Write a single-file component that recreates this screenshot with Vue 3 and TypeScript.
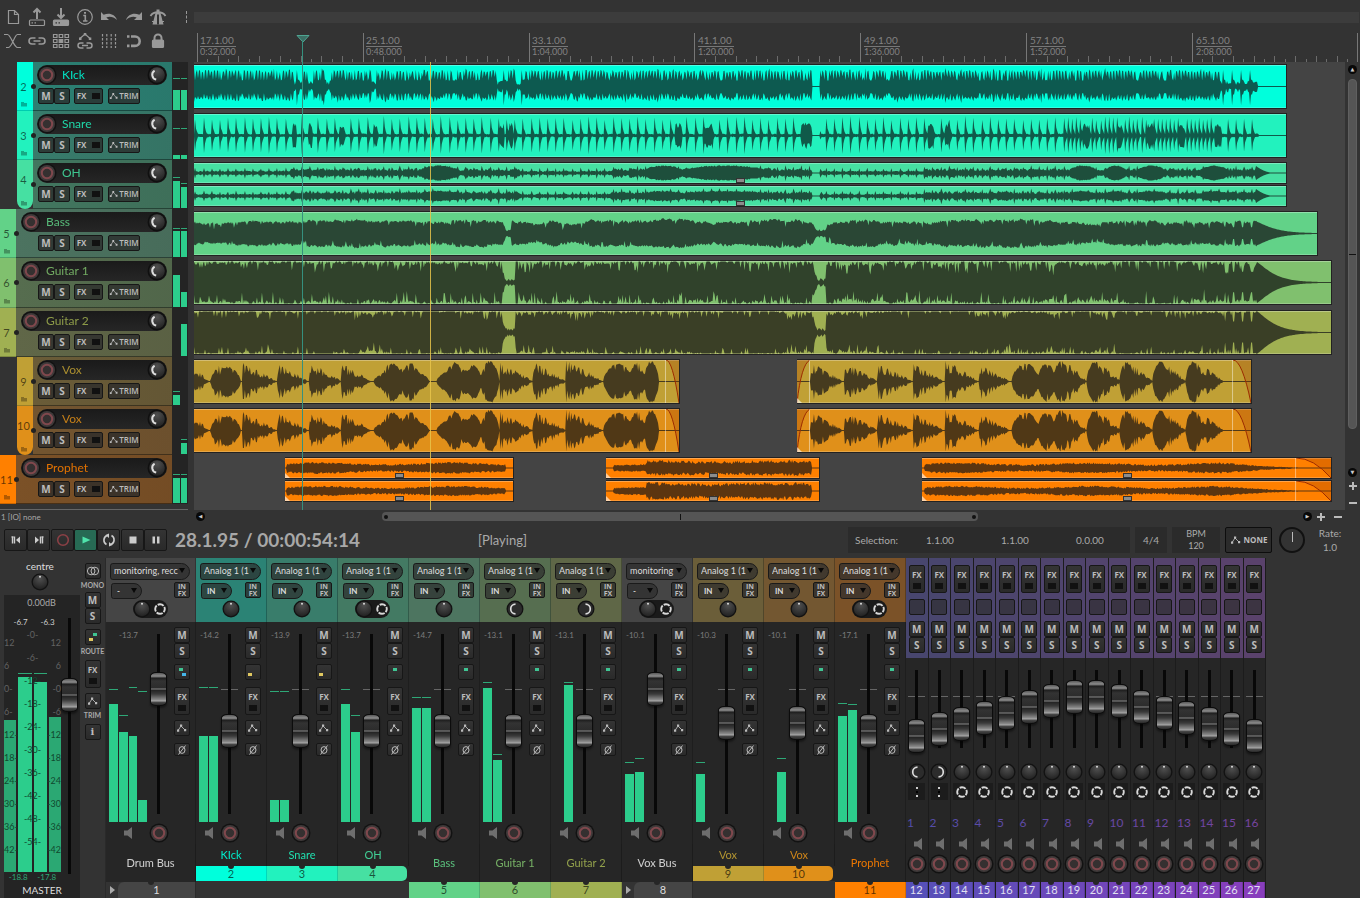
<script setup lang="ts">
type Amp = [number, number]
interface Lane { d: string; h: number }
interface Clip { x: number; w: number; lanes: Lane[]; handle: boolean; fadeIn: number; fadeOut: number }
interface Meter { h: number; peak: number }
interface Track {
  no: number; name: string; child: boolean; last: boolean; color: string; panel: string; ink: string
  meters: Meter[]; clips: Clip[]
}
interface Strip {
  no: number; name: string; kind: 'bus' | 'child' | 'solo'; last: boolean; wide: boolean
  color: string; head: string; input: string; mode: string; peak: string; fader: number
  pan: 'mid' | 'left' | 'right'; width: boolean; route: string; meters: Meter[]
}

const ORIGIN = 194
const SPAN = 1151
const pct = (n: number): string => (n / SPAN) * 100 + '%'

function seeded(seed: number): () => number {
  let s = seed
  return () => {
    s = (s * 1664525 + 1013904223) % 4294967296
    return s / 4294967296
  }
}

function trace(x0: number, x1: number, h: number, env: (x: number) => Amp): string {
  const mid = h / 2
  const up: string[] = []
  const down: string[] = []
  for (let x = x0; x <= x1; x++) {
    const [a, b] = env(x)
    up.push(`${x - x0} ${(mid - 0.4 - Math.max(0, a) * mid).toFixed(1)}`)
    down.push(`${x - x0} ${(mid + 0.4 + Math.max(0, b) * mid).toFixed(1)}`)
  }
  return `M${up.join('L')}L${down.reverse().join('L')}Z`
}

function clip(x: number, end: number, envs: ((x: number) => Amp)[], fadeIn = 0, fadeOut = 0): Clip {
  const h = envs.length > 1 ? 20 : 43
  return {
    x, w: end - x, fadeIn, fadeOut, handle: envs.length > 1,
    lanes: envs.map((e) => ({ h, d: trace(x, end, h, e) })),
  }
}

const within = (x: number, spans: number[][]): number[] | undefined => spans.find(([a, b]) => x >= a && x <= b)
const BREAK = [[813, 820]]

function kick(): (x: number) => Amp {
  const r = seeded(7)
  return (x) => {
    if (within(x, BREAK) || x > 1258) return [0, 0]
    if (within(x, [[294, 302], [308, 313], [324, 330], [372, 376], [497, 508], [516, 524], [1222, 1258]])) {
      const p = x % 9
      return p < 1 ? [0.75, 0.85] : p < 3 ? [0.3, 0.35] : [0.06 + r() * 0.2, 0.06 + r() * 0.2]
    }
    const tall = x % 16 === 2 ? 0.1 : 0
    if (r() < 0.14) return [0.26, 0.3]
    return x % 3 === 0 ? [0.26 + r() * 0.2, 0.3 + r() * 0.2] : [0.62 + r() * 0.14 + tall, 0.5 + r() * 0.16 + tall]
  }
}

function snare(): (x: number) => Amp {
  const r = seeded(11)
  const dense = [[293, 296], [309, 312], [340, 343], [374, 377], [501, 504], [510, 513], [676, 682], [706, 713], [802, 812], [929, 934], [946, 949], [1084, 1090], [1119, 1123], [1149, 1154], [1181, 1185], [1216, 1222]]
  let hit = 0
  let amp = 0.75
  return (x) => {
    if (within(x, BREAK) || x > 1259) return [0, 0]
    if (within(x, dense)) return [0.3 + r() * 0.28, 0.34 + r() * 0.28]
    const period = x > 1066 && x < 1222 ? 4.1 : 8.2
    const beat = Math.floor((x - 195) / period)
    if (beat !== hit) {
      hit = beat
      amp = 0.68 + r() * 0.18
    }
    const p = Math.floor(x - 195 - beat * period)
    const k = p === 0 ? amp : p === 1 ? amp * 0.42 : p === 2 ? 0.16 : 0.03
    return [k + r() * 0.04, k * 0.96 + r() * 0.04]
  }
}

function overhead(seed: number, full: number): (x: number) => Amp {
  const r = seeded(seed)
  const blobs = [[420, 458], [645, 683], [682, 768], [1070, 1097], [1106, 1126], [1138, 1166], [1202, 1228]]
  return (x) => {
    if (within(x, BREAK)) return [0.02, 0.02]
    if (x > 1256) {
      const t = Math.max(0, 1 - (x - 1256) / 18)
      return [0.75 * t * t, 0.75 * t * t]
    }
    const busy = x > 290 && !(x > 520 && x < 612) && !(x > 822 && x < 925)
    const beat = Math.floor((x - 195) % 8.2) === 0 ? 0.3 : 0
    const base = (busy ? 0.16 : 0.07) + beat + r() * (busy ? 0.28 : 0.14)
    const b = within(x, blobs)
    if (b) {
      const v = full * Math.pow(Math.abs(Math.sin((Math.PI * (x - b[0])) / (b[1] - b[0]))), 0.4) + r() * 0.12
      return [Math.max(base, v), Math.max(base, v)]
    }
    return [base, base * (0.9 + r() * 0.2)]
  }
}

function sustained(seed: number, level: number, noise: number, dips: number, gaps: number[][]): (x: number) => Amp {
  const r = seeded(seed)
  let drift = 0
  const side = (): number => {
    const dip = r() < dips ? noise * 2.2 * r() : 0
    return Math.min(0.96, level + drift + (r() - 0.7) * noise - dip)
  }
  return (x) => {
    drift = drift * 0.94 + (r() - 0.5) * 0.06
    if (x > 1257) {
      const k = level * Math.exp(-Math.pow((x - 1257) / 19, 1.25))
      return x > 1318 ? [0, 0] : [k, k]
    }
    const g = within(x, gaps)
    if (g) {
      const v = 0.05 + r() * 0.14 + 0.35 * Math.max(0, 1 - (x - g[0]) / 3)
      return [v, v]
    }
    if (x > 1225 && (x - 1225) % 9 < 2) return [level * 0.5, level * 0.45]
    return [side(), side()]
  }
}

const PHRASES = [
  [186, 209, 0.85, 0], [210, 241, 0.72, 1], [215, 241, 0.85, 0], [243, 276, 0.85, 0], [278, 308, 0.8, 0], [310, 341, 0.85, 0], [342, 371, 0.8, 0],
  [374, 430, 0.6, 1], [382, 403, 0.9, 1], [401, 421, 0.85, 1], [437, 481, 0.6, 1], [445, 466, 0.9, 1], [466, 482, 0.78, 1], [481, 500, 0.98, 1], [501, 533, 0.85, 0], [534, 566, 0.9, 0], [567, 603, 0.95, 0],
  [604, 634, 0.85, 1], [630, 646, 0.86, 1], [644, 660, 0.98, 1], [811, 842, 0.85, 0], [845, 877, 0.82, 0], [878, 912, 0.82, 0], [914, 943, 0.8, 0],
  [946, 978, 0.96, 0], [980, 1010, 0.78, 0], [1012, 1040, 0.86, 1], [1038, 1056, 0.9, 1], [1053, 1071, 0.97, 1],
  [1070, 1087, 0.8, 0], [1087, 1105, 0.96, 1], [1103, 1121, 0.76, 0], [1120, 1135, 0.96, 1], [1134, 1153, 0.78, 0],
  [1153, 1170, 0.95, 1], [1168, 1186, 0.76, 0], [1186, 1204, 0.98, 1], [1202, 1224, 0.74, 0],
]

function vocal(seed: number): (x: number) => Amp {
  const r = seeded(seed)
  return (x) => {
    let a = 0
    let solid = false
    for (const [s, e, p, round] of PHRASES) {
      if (x < s || x > e) continue
      const t = (x - s) / (e - s)
      const v = round ? p * Math.pow(Math.abs(Math.sin(Math.PI * t)), 0.6) : p * Math.pow(1 - t, 0.85)
      if (v > a) {
        a = v
        solid = round === 1
      }
    }
    const n = r()
    const u = r()
    const w = r()
    if (a === 0) return [0, 0]
    const notch = solid ? (n < 0.12 ? 0.65 : 0.97) : n < 0.32 ? 0.48 : n < 0.6 ? 0.7 : 1
    return [Math.min(0.96, a * notch * (0.85 + u * 0.18)), Math.min(0.96, a * notch * (0.9 + w * 0.18))]
  }
}

function pad(seed: number, level: number, x0: number, x1: number, swell = 0): (x: number) => Amp {
  const r = seeded(seed)
  return (x) => {
    if (x < x0 || x > x1) return [0, 0]
    const l = swell ? (x > swell ? level * 2 : level * 0.8) : level
    const wob = 0.75 + (swell && x > swell ? 0.1 : 0.3) * Math.sin((x - x0) / 21)
    const out = x1 > 1290 && x > 1220 ? (x1 - x) / (x1 - 1220) : 1
    return [l * (wob + r() * 0.6) * out, l * (wob + r() * 0.6) * out]
  }
}

const PAUSES = [[503, 515], [815, 826]]
const m = (h: number, peak: number): Meter => ({ h, peak })

const tracks: Track[] = [
  { no: 2, name: 'KIck', child: true, last: false, color: '#00ffdc', panel: '#2c8073', ink: '#0d5a50', meters: [m(20, 31), m(20, 31)], clips: [clip(194, 1287, [kick()])] },
  { no: 3, name: 'Snare', child: true, last: false, color: '#22f2be', panel: '#387b6b', ink: '#105a4a', meters: [m(4, 30), m(4, 30)], clips: [clip(194, 1287, [snare()])] },
  { no: 4, name: 'OH', child: true, last: true, color: '#46e0a2', panel: '#42765f', ink: '#1e4f3c', meters: [m(27, 30), m(21, 24)], clips: [clip(194, 1287, [overhead(3, 0.62), overhead(5, 0.38)])] },
  { no: 5, name: 'Bass', child: false, last: false, color: '#62d288', panel: '#4c7360', ink: '#2a4735', meters: [m(26, 28), m(26, 28)], clips: [clip(194, 1318, [sustained(21, 0.54, 0.12, 0.08, [[503, 511], [814, 826]])])] },
  { no: 6, name: 'Guitar 1', child: false, last: false, color: '#80c06e', panel: '#566d4f', ink: '#30422b', meters: [m(32, 0), m(15, 0)], clips: [clip(194, 1332, [sustained(31, 0.96, 0.22, 0.2, PAUSES)])] },
  { no: 7, name: 'Guitar 2', child: false, last: false, color: '#a0b052', panel: '#606748', ink: '#3a3f26', meters: [m(0, 0), m(32, 0)], clips: [clip(194, 1332, [sustained(41, 0.99, 0.16, 0.22, PAUSES)])] },
  { no: 9, name: 'Vox', child: true, last: false, color: '#c0a035', panel: '#6a5c38', ink: '#463b1f', meters: [m(10, 13), m(0, 0)], clips: [clip(194, 680, [vocal(51)], 0, 13), clip(797, 1252, [vocal(53)], 13, 18)] },
  { no: 10, name: 'Vox', child: true, last: true, color: '#e0901a', panel: '#735530', ink: '#503816', meters: [m(0, 0), m(11, 14)], clips: [clip(194, 680, [vocal(51)], 0, 13), clip(797, 1252, [vocal(53)], 13, 18)] },
  { no: 11, name: 'Prophet', child: false, last: false, color: '#ff8000', panel: '#7b5127', ink: '#5c3510', meters: [m(25, 28), m(25, 28)], clips: [
    clip(285, 514, [pad(61, 0.34, 287, 506), pad(62, 0.3, 287, 506)]),
    clip(606, 820, [pad(63, 0.27, 614, 812, 646), pad(64, 0.3, 614, 812, 646)]),
    clip(922, 1332, [pad(65, 0.32, 925, 1305), pad(66, 0.3, 925, 1305)], 0, 35),
  ] },
]

const marks = ['17.1.00|0:32.000', '25.1.00|0:48.000', '33.1.00|1:04.000', '41.1.00|1:20.000', '49.1.00|1:36.000', '57.1.00|1:52.000', '65.1.00|2:08.000']
  .map((t, i) => ({ bar: t.split('|')[0], time: t.split('|')[1], x: 3 + i * 166 }))
const ticks = Array.from({ length: 113 }, (_, i) => ({
  x: Math.round(3 + i * 10.36) + 0.5,
  y: i % 16 === 0 ? 0 : i % 2 === 0 ? 23 : 26,
}))

const strips: Strip[] = [
  { no: 1, name: 'Drum Bus', kind: 'bus', last: false, wide: true, color: '#e0e0e0', head: '#454545', input: 'monitoring, recc', mode: '-', peak: '-13.7', fader: 74, pan: 'mid', width: true, route: 'gb', meters: [m(118, 132), m(90, 106), m(86, 134), m(22, 130)] },
  { no: 2, name: 'KIck', kind: 'child', last: false, wide: false, color: '#00ffdc', head: '#2b8375', input: 'Analog 1 (1', mode: 'IN', peak: '-14.2', fader: 45, pan: 'mid', width: false, route: 'y', meters: [m(86, 134), m(86, 134)] },
  { no: 3, name: 'Snare', kind: 'child', last: false, wide: false, color: '#22f2be', head: '#397d6b', input: 'Analog 1 (1', mode: 'IN', peak: '-13.9', fader: 45, pan: 'mid', width: false, route: 'y', meters: [m(22, 130), m(22, 130)] },
  { no: 4, name: 'OH', kind: 'child', last: true, wide: false, color: '#46e0a2', head: '#437a63', input: 'Analog 1 (1', mode: 'IN', peak: '-13.7', fader: 45, pan: 'mid', width: true, route: 'g', meters: [m(118, 132), m(90, 106)] },
  { no: 5, name: 'Bass', kind: 'solo', last: false, wide: false, color: '#62d288', head: '#4d7560', input: 'Analog 1 (1', mode: 'IN', peak: '-14.7', fader: 45, pan: 'mid', width: false, route: 'g', meters: [m(114, 124), m(114, 124)] },
  { no: 6, name: 'Guitar 1', kind: 'solo', last: false, wide: false, color: '#80c06e', head: '#566e50', input: 'Analog 1 (1', mode: 'IN', peak: '-13.1', fader: 45, pan: 'left', width: false, route: 'g', meters: [m(134, 139), m(62, 67)] },
  { no: 7, name: 'Guitar 2', kind: 'solo', last: false, wide: false, color: '#a0b052', head: '#5f6747', input: 'Analog 1 (1', mode: 'IN', peak: '-13.1', fader: 45, pan: 'right', width: false, route: 'g', meters: [m(0, 0), m(137, 139)] },
  { no: 8, name: 'Vox Bus', kind: 'bus', last: false, wide: false, color: '#e0e0e0', head: '#454545', input: 'monitoring', mode: '-', peak: '-10.1', fader: 74, pan: 'mid', width: true, route: 'g', meters: [m(48, 59), m(50, 63)] },
  { no: 9, name: 'Vox', kind: 'child', last: false, wide: false, color: '#c0a035', head: '#6b5e39', input: 'Analog 1 (1', mode: 'IN', peak: '-10.3', fader: 51, pan: 'mid', width: false, route: 'g', meters: [m(48, 59), m(0, 0)] },
  { no: 10, name: 'Vox', kind: 'child', last: true, wide: false, color: '#e0901a', head: '#735731', input: 'Analog 1 (1', mode: 'IN', peak: '-10.1', fader: 51, pan: 'mid', width: false, route: 'g', meters: [m(0, 0), m(50, 63)] },
  { no: 11, name: 'Prophet', kind: 'solo', last: false, wide: false, color: '#ff8000', head: '#7b5228', input: 'Analog 1 (1', mode: 'IN', peak: '-17.1', fader: 45, pan: 'mid', width: true, route: 'g', meters: [m(106, 118), m(112, 117)] },
]

const mix = (a: number[], b: number[], t: number): string => `rgb(${a.map((v, i) => Math.round(v + (b[i] - v) * t)).join(',')})`
const levels = [2, 16, 26, 38, 48, 60, 73, 81]
const minis = Array.from({ length: 16 }, (_, i) => ({
  no: i + 12,
  name: String(i + 1),
  fader: levels[i < 8 ? i : 15 - i],
  head: mix([72, 70, 110], [90, 66, 108], i / 15),
  band: mix([86, 80, 184], [136, 62, 188], i / 15),
  text: mix([84, 78, 170], [118, 68, 160], i / 15),
  pan: i === 0 ? 'left' : i === 1 ? 'right' : 'mid',
}))

const centerScale = ['-0-', '-6-', '-12-', '-18-', '-24-', '-30-', '-36-', '-42-', '-48-', '-54-']
const leftScale = ['12', '6', '0-', '6-', '12-', '18-', '24-', '30-', '36-', '42-']
const rightScale = ['12', '6', '-0', '-6', '-12', '-18', '-24', '-30', '-36', '-42']
const tools = ['New project', 'Open', 'Save', 'Project settings', 'Undo', 'Redo', 'Metronome', 'Auto crossfade', 'Item grouping', 'Ripple edit', 'Envelope link', 'Grid lines', 'Snap', 'Lock']
</script>

<template>
  <div class="daw">
    <svg class="defs" aria-hidden="true">
      <defs>
        <radialGradient id="dome" cx="50%" cy="25%" r="75%"><stop offset="0" stop-color="#505050" /><stop offset="1" stop-color="#222" /></radialGradient>
        <symbol id="rec" viewBox="0 0 20 20"><circle cx="10" cy="10" r="9.5" fill="#121212" /><circle cx="10" cy="10" r="8" fill="#3f3a3a" /><circle cx="10" cy="10" r="5.2" fill="#353030" stroke="#80484d" stroke-width="2" /></symbol>
        <symbol id="knob" viewBox="0 0 18 18"><circle cx="9" cy="9" r="8.5" fill="#121212" /><circle cx="9" cy="9" r="7.2" fill="url(#dome)" /><circle cx="9" cy="3.8" r="1" fill="#ddd" /></symbol>
        <symbol id="knob-left" viewBox="0 0 18 18"><circle cx="9" cy="9" r="8.5" fill="#121212" /><circle cx="9" cy="9" r="7.2" fill="#2c2c2c" /><path d="M9.500 4.200a4.800 4.800 0 1 0 0 9.600" fill="none" stroke="#ddd" stroke-width="1.7" /></symbol>
        <symbol id="knob-right" viewBox="0 0 18 18"><circle cx="9" cy="9" r="8.5" fill="#121212" /><circle cx="9" cy="9" r="7.2" fill="#2c2c2c" /><path d="M8.500 4.200a4.800 4.800 0 1 1 0 9.600" fill="none" stroke="#ddd" stroke-width="1.7" /></symbol>
        <symbol id="vol" viewBox="0 0 20 20"><circle cx="10" cy="10" r="9.5" fill="#101010" /><circle cx="10" cy="10" r="7.8" fill="url(#dome)" /><path d="M7.600 5.600a4.900 4.900 0 0 0 1.600 9" fill="none" stroke="#ddd" stroke-width="2" /></symbol>
        <symbol id="ring" viewBox="0 0 14 14"><circle cx="7" cy="7" r="4.8" fill="none" stroke="#d8d8d8" stroke-width="1.9" stroke-dasharray="6.4 1.14" stroke-dashoffset="3" /></symbol>
        <symbol id="dots" viewBox="0 0 14 14"><path d="M6 2h2v2H6zM6 10h2v2H6z" fill="#ccc" /><path d="M6 6h2v2H6z" fill="#000" /></symbol>
        <symbol id="speaker" viewBox="0 0 12 14"><path d="M1 4.500h3.500L9 1v12L4.500 9.500H1z" fill="#6e6e6e" /></symbol>
        <symbol id="env" viewBox="0 0 12 12"><path d="M2 8.500L5 4l4 4" fill="none" stroke="#aaa" stroke-width="1" /><path d="M1 7.500h2.200v2.200H1zM4 2.500h2.200v2.200H4zM8 7h2.200v2.200H8z" fill="#bbb" /></symbol>
        <symbol id="phase" viewBox="0 0 12 12"><ellipse cx="6" cy="6" rx="3" ry="3.400" fill="none" stroke="#bbb" /><path d="M2.500 10.500l7-9" stroke="#bbb" /></symbol>
        <symbol id="folder" viewBox="0 0 8 6"><path d="M1 1h3v1h3v3.500H1z" fill="#000" fill-opacity=".3" /></symbol>
        <symbol id="plus" viewBox="0 0 8 8"><path d="M3 0h2v3h3v2H5v3H3V5H0V3h3z" fill="#bbb" /></symbol>
        <symbol id="minus" viewBox="0 0 8 8"><path d="M0 3h8v2H0z" fill="#bbb" /></symbol>
      </defs>
    </svg>

    <header class="topbar">
      <div class="tools">
        <button v-for="(t, i) in tools" :key="t" class="tool" :aria-label="t">
          <svg viewBox="0 0 24 24" width="24" height="24" fill="none" stroke="#999" stroke-width="1.2">
            <path v-if="i === 0" d="M7.500 5.500h6l4 4v9h-10zM13.500 5.500v4h4" />
            <g v-else-if="i === 1"><path d="M12 14V5M8.500 7.500L12 4l3.500 3.500" stroke-width="2" /><rect x="4.500" y="15" width="15" height="5.500" rx="1" /><path d="M6.500 17.800h1.500M9.500 17.800h1.500" /></g>
            <g v-else-if="i === 2"><path d="M12 3v9M8.500 9.500L12 13l3.500-3.500" stroke-width="2" /><rect x="4.500" y="15" width="15" height="5.500" rx="1" fill="#999" /><path d="M6.500 17.800h1.500M9.500 17.800h1.500" stroke="#333" /></g>
            <g v-else-if="i === 3"><circle cx="12" cy="12" r="7.300" /><path d="M10.300 10.500h2v5.500M10 16h4.500" stroke-width="1.600" /><path d="M11 7h2v1.800h-2z" fill="#999" stroke="none" /></g>
            <path v-else-if="i === 4" d="M4 7v8h8l-2.700-2.600c3.700-1.300 7.200-.6 10.700 2.600C18 9.500 12.500 7.500 6.700 9.800z" fill="#999" stroke="none" />
            <path v-else-if="i === 5" d="M21 7v8h-8l2.700-2.600c-3.700-1.300-7.200-.6-10.700 2.600C7 9.500 12.500 7.500 18.300 9.800z" fill="#999" stroke="none" />
            <g v-else-if="i === 6"><path d="M10.500 8h5l3 11.500h-11z" fill="#999" stroke="none" /><path d="M5.500 11c3-5 12-5 15 0" stroke-width="1.800" /><path d="M13 9.500v10" stroke="#333" stroke-width="2" /><path d="M13 4.500v3" stroke-width="3" /><path d="M7 16.500h4M15 16.500h4" /></g>
            <path v-else-if="i === 7" d="M3 5.500h3.500c3 0 6.500 13 10 13H20M20 5.500h-3.500c-3 0-5.500 13-9 13H5" />
            <g v-else-if="i === 8"><path d="M10.500 9H7a3 3 0 0 0 0 6h3.500M13.500 9H17a3 3 0 0 1 0 6h-3.500M8.500 12h7" stroke-width="1.600" /></g>
            <g v-else-if="i === 9"><path d="M4.500 5.500h3.500v3H4.500zM10.200 5.500h3.500v3h-3.500zM16 5.500h3.500v3H16zM4.500 10.500h3.500v3H4.500zM16 10.500h3.500v3H16zM4.500 15.500h3.500v3H4.500zM10.200 15.500h3.500v3h-3.500zM16 15.500h3.500v3H16z" /><path d="M10.200 10.500h3.500v3h-3.500z" fill="#999" /></g>
            <g v-else-if="i === 10"><path d="M7 9.500L12 5l5 4.500" /><path d="M6 8.500h2.500V11H6zM10.800 4h2.500v2.500h-2.500zM15.800 8.500h2.500V11h-2.500z" fill="#999" stroke="none" /><path d="M10.500 14H7.500a2.500 2.500 0 0 0 0 5h3M13.500 14h3a2.500 2.500 0 0 1 0 5h-3M9 16.500h6" stroke-width="1.500" /></g>
            <path v-else-if="i === 11" d="M5.500 5v14M9.800 5v14M14.200 5v14M18.500 5v14" stroke-dasharray="2.500 1.500" />
            <g v-else-if="i === 12"><path d="M10 7.500h4a4.700 4.700 0 0 1 0 9.400h-4" stroke-width="2.600" /><path d="M6 7.500h2.500M6 16.900h2.500" stroke-width="2.600" /></g>
            <g v-else><rect x="7.500" y="11" width="11" height="7.500" rx="1" fill="#999" /><path d="M9.500 11V9a3.500 3.500 0 0 1 7 0v2" stroke-width="2" /></g>
          </svg>
        </button>
      </div>
      <div class="ruler-col">
        <div class="strip-bar"></div>
        <div class="ruler">
          <svg class="ticks" :viewBox="`0 0 ${SPAN} 29`" preserveAspectRatio="none">
            <path v-for="t in ticks" :key="t.x" :d="`M${t.x} ${t.y}V29`" :stroke="t.y === 0 ? '#777' : '#6c6c6c'" stroke-width="1" />
          </svg>
          <div v-for="k in marks" :key="k.bar" class="mark" :style="{ left: pct(k.x) }">
            <span class="bar-no">{{ k.bar }}</span><span class="clock">{{ k.time }}</span>
          </div>
          <svg class="head-marker" :style="{ left: pct(108.5) }" viewBox="0 0 14 8" width="14" height="8"><path d="M1 .5h12L7 7z" fill="#3c6f65" stroke="#4fa592" /></svg>
        </div>
      </div>
    </header>

    <main class="arrange">
      <section class="tcp" aria-label="Tracks">
        <div v-for="t in tracks" :key="t.no" class="tcp-row" :class="{ child: t.child, last: t.last }" :style="{ '--c': t.color, '--p': t.panel }">
          <div class="stripe"><span>{{ t.no }}</span><svg width="8" height="6"><use href="#folder" /></svg></div>
          <div class="panel">
            <div class="pill">
              <button class="round" aria-label="Record arm"><svg width="20" height="20"><use href="#rec" /></svg></button>
              <span class="track-name">{{ t.name }}</span>
              <button class="round" aria-label="Volume"><svg width="20" height="20"><use href="#vol" /></svg></button>
            </div>
            <div class="tcp-buttons">
              <button class="btn sq">M</button><button class="btn sq">S</button>
              <button class="btn fx">FX <i class="led"></i></button>
              <button class="btn trim"><svg width="10" height="10"><use href="#env" /></svg>TRIM</button>
            </div>
          </div>
          <div class="tcp-meter">
            <div v-for="(x, i) in t.meters" :key="i" class="chan">
              <i class="level" :style="{ height: x.h + 'px' }"></i><i v-if="x.peak" class="peak" :style="{ bottom: x.peak + 'px' }"></i>
            </div>
          </div>
        </div>
      </section>

      <section class="timeline" aria-label="Arrangement">
        <div v-for="t in tracks" :key="t.no" class="lane-row">
          <div v-for="c in t.clips" :key="c.x" class="clip" :style="{ left: pct(c.x - ORIGIN), width: pct(c.w), '--c': t.color }">
            <div v-for="(l, i) in c.lanes" :key="i" class="take">
              <svg :viewBox="`0 0 ${c.w} ${l.h}`" preserveAspectRatio="none">
                <path :d="l.d" :fill="t.ink" />
                <g v-if="c.fadeOut">
                  <path :d="`M${c.w - c.fadeOut} 0Q${c.w - c.fadeOut / 2} 0 ${c.w} ${l.h}V0z`" fill="#a04000" fill-opacity=".3" />
                  <path :d="`M${c.w - c.fadeOut} 0Q${c.w - c.fadeOut / 2} 0 ${c.w} ${l.h}`" fill="none" stroke="#9c2a00" />
                  <path :d="`M${c.w - c.fadeOut - 0.5} 0V${l.h}`" stroke="#fff" stroke-opacity=".45" />
                </g>
                <g v-if="c.fadeIn">
                  <path :d="`M0 ${l.h}Q${c.fadeIn / 3} 4 ${c.fadeIn} 0H0z`" fill="#a04000" fill-opacity=".3" />
                  <path :d="`M0 ${l.h}Q${c.fadeIn / 3} 4 ${c.fadeIn} 0`" fill="none" stroke="#9c2a00" />
                  <path :d="`M${c.fadeIn - 0.5} 0V${l.h}`" stroke="#fff" stroke-opacity=".45" />
                </g>
                <path v-if="c.x > ORIGIN" :d="`M0 ${l.h - 5}L5 ${l.h}H0z`" fill="#fff" fill-opacity=".6" />
              </svg>
              <i v-if="c.handle" class="handle"></i>
            </div>
          </div>
        </div>
        <i class="cursor play" :style="{ left: pct(108) }"></i>
        <i class="cursor edit" :style="{ left: pct(236) }"></i>
      </section>

      <aside class="vscroll">
        <button class="dot" aria-label="Scroll up">▲</button>
        <div class="vthumb"><i></i></div>
        <button class="dot" aria-label="Scroll down">▼</button>
        <button class="zoom" aria-label="Zoom in vertically"><svg width="8" height="8"><use href="#plus" /></svg></button>
        <button class="zoom" aria-label="Zoom out vertically"><svg width="8" height="8"><use href="#minus" /></svg></button>
      </aside>
    </main>

    <div class="hrow">
      <div class="status">1 [IO] none</div>
      <button class="dot" aria-label="Scroll left">◀</button>
      <div class="htrack"><div class="hthumb"><i></i><b></b><i></i></div></div>
      <button class="dot" aria-label="Scroll right">▶</button>
      <button class="zoom" aria-label="Zoom in"><svg width="8" height="8"><use href="#plus" /></svg></button>
      <button class="zoom" aria-label="Zoom out"><svg width="8" height="8"><use href="#minus" /></svg></button>
    </div>

    <section class="transport" aria-label="Transport">
      <div class="keys">
        <button class="btn key" aria-label="Start"><svg viewBox="0 0 22 22"><path d="M6.500 8h2M9.500 7.500v7M7.500 8v6.500" stroke="#ccc" stroke-width="1.400" /><path d="M15 7.500v7l-4-3.500z" fill="#ccc" /></svg></button>
        <button class="btn key" aria-label="End"><svg viewBox="0 0 22 22"><path d="M15.500 8h-2M12.500 7.500v7M14.500 8v6.500" stroke="#ccc" stroke-width="1.400" /><path d="M7 7.500v7l4-3.500z" fill="#ccc" /></svg></button>
        <button class="btn key gap" aria-label="Record"><svg viewBox="0 0 22 22"><circle cx="11" cy="11" r="5.300" fill="none" stroke="#8c4046" stroke-width="1.600" /></svg></button>
        <button class="btn key on" aria-label="Play"><svg viewBox="0 0 22 22"><path d="M7.500 7.500v7l8-3.500z" fill="#4fe3ab" /></svg></button>
        <button class="btn key" aria-label="Repeat"><svg viewBox="0 0 22 22"><path d="M8.500 15.500a5 5 0 0 1 .5-9M13.500 6.500a5 5 0 0 1-.5 9" fill="none" stroke="#ccc" stroke-width="1.600" /><path d="M11 4.500v4.500L7.500 6zM11 17.500V13l3.500 3z" fill="#ccc" /></svg></button>
        <button class="btn key gap" aria-label="Stop"><svg viewBox="0 0 22 22"><path d="M7.500 7.500h7v7h-7z" fill="#ccc" /></svg></button>
        <button class="btn key" aria-label="Pause"><svg viewBox="0 0 22 22"><path d="M7.500 7.500h2.500v7H7.500zM12 7.500h2.500v7H12z" fill="#ccc" /></svg></button>
      </div>
      <div class="time">28.1.95 / 00:00:54:14</div>
      <div class="state">[Playing]</div>
      <div class="selection"><span>Selection:</span><span>1.1.00</span><span>1.1.00</span><span>0.0.00</span></div>
      <div class="sig">4/4</div>
      <div class="bpm"><span>BPM</span><span>120</span></div>
      <button class="btn none"><svg width="12" height="12"><use href="#env" /></svg>NONE</button>
      <button class="rate-knob" aria-label="Play rate"></button>
      <div class="rate"><span>Rate:</span><span>1.0</span></div>
    </section>

    <section class="mixer" aria-label="Mixer">
      <div class="master">
        <div class="master-main">
          <div class="master-pan"><span>centre</span><button class="round" aria-label="Master pan"><svg width="18" height="18"><use href="#knob" /></svg></button></div>
          <div class="master-body">
            <div class="master-meter">
              <div class="db">0.00dB</div>
              <div class="pk"><span>-6.7</span><span>-6.3</span></div>
              <div class="bars">
                <div class="mchan outer"><i class="level" :style="{ height: '152px' }"></i></div>
                <div class="mchan"><i class="level" :style="{ height: '195px' }"></i><i class="peak" :style="{ bottom: '198px' }"></i></div>
                <div class="mchan"><i class="level" :style="{ height: '190px' }"></i><i class="peak" :style="{ bottom: '198px' }"></i></div>
                <div class="mchan outer"><i class="level" :style="{ height: '155px' }"></i></div>
                <div class="scale left"><span v-for="s in leftScale" :key="s">{{ s }}</span></div>
                <div class="scale mid"><span v-for="s in centerScale" :key="s">{{ s }}</span></div>
                <div class="scale right"><span v-for="s in rightScale" :key="s">{{ s }}</span></div>
              </div>
              <div class="rms"><span>-18.8</span><span>-17.8</span></div>
            </div>
            <input class="fader big" type="range" min="0" max="100" value="73" aria-label="Master volume" />
          </div>
          <div class="master-name">MASTER</div>
        </div>
        <div class="master-side">
          <button class="btn b16" aria-label="Mono"><svg viewBox="0 0 16 16"><circle cx="6.200" cy="8" r="3.800" fill="none" stroke="#bbb" /><circle cx="9.800" cy="8" r="3.800" fill="none" stroke="#bbb" /></svg></button>
          <span class="cap">MONO</span>
          <button class="btn b16">M</button><button class="btn b16">S</button>
          <button class="btn b16 route-m" aria-label="Routing"><svg viewBox="0 0 16 16"><path d="M8 4h4v3H8z" fill="#3fc593" /><path d="M4 9h4v3H4z" fill="#e0c860" /></svg></button>
          <span class="cap">ROUTE</span>
          <button class="btn fxbox">FX<i class="led"></i></button>
          <button class="btn b16 trim-m" aria-label="Envelope"><svg viewBox="0 0 16 16"><use href="#env" x="2" y="2" width="12" height="12" /></svg></button>
          <span class="cap">TRIM</span>
          <button class="btn b16 info">i</button>
        </div>
      </div>

      <div v-for="s in strips" :key="s.no" class="strip" :class="[s.kind, { wide: s.wide, last: s.last }]" :style="{ '--c': s.color, '--h': s.head }">
        <div class="strip-head">
          <label class="sel"><select :aria-label="s.name + ' input'"><option>{{ s.input }}</option></select></label>
          <div class="in-row">
            <label class="sel small"><select :aria-label="s.name + ' mode'"><option>{{ s.mode }}</option></select></label>
            <button class="btn infx"><span>IN</span><span>FX</span></button>
          </div>
          <div class="pan-row">
            <span class="pans" :class="{ both: s.width }">
              <button class="round" aria-label="Pan"><svg width="18" height="18"><use :href="s.pan === 'mid' ? '#knob' : '#knob-' + s.pan" /></svg></button>
              <button v-if="s.width" class="round" aria-label="Width"><svg width="14" height="14"><use href="#ring" /></svg></button>
            </span>
          </div>
        </div>
        <div class="strip-body">
          <div class="meter-col">
            <div class="peak-text">{{ s.peak }}</div>
            <div class="meters">
              <div v-for="(x, i) in s.meters" :key="i" class="chan">
                <i class="level" :style="{ height: x.h + 'px' }"></i><i v-if="x.peak" class="peak" :style="{ bottom: x.peak + 'px' }"></i>
              </div>
            </div>
          </div>
          <input class="fader" type="range" min="0" max="100" :value="s.fader" :aria-label="s.name + ' volume'" />
          <div class="strip-btns">
            <button class="btn b16">M</button><button class="btn b16">S</button>
            <button class="btn b16 route" aria-label="Routing"><svg viewBox="0 0 16 16">
              <path v-if="s.route === 'g'" d="M6 4h4v3H6z" fill="#3fc593" />
              <path v-if="s.route === 'y'" d="M3 9h4v3H3z" fill="#e0c860" />
              <g v-if="s.route === 'gb'"><path d="M5 4h4v3H5z" fill="#3fc593" /><path d="M8 9h4v3H8z" fill="#45b5e8" /></g>
            </svg></button>
            <button class="btn fxbox">FX<i class="led"></i></button>
            <button class="btn b16 env-btn" aria-label="Envelope"><svg viewBox="0 0 16 16"><use href="#env" x="2" y="2" width="12" height="12" /></svg></button>
            <button class="btn phase" aria-label="Phase"><svg width="12" height="12"><use href="#phase" /></svg></button>
          </div>
        </div>
        <div class="strip-foot">
          <svg width="12" height="14"><use href="#speaker" /></svg>
          <button class="round" aria-label="Record arm"><svg width="20" height="20"><use href="#rec" /></svg></button>
        </div>
        <div class="strip-name">{{ s.name }}</div>
        <div class="band"><i class="tri"></i><span>{{ s.no }}</span></div>
      </div>

      <div class="minis">
        <div v-for="s in minis" :key="s.no" class="mini" :style="{ '--h': s.head, '--b': s.band, '--t': s.text }">
          <div class="mini-head">
            <button class="btn fxbox">FX<i class="led"></i></button>
            <button class="btn b16 blank" aria-label="Routing"></button>
            <button class="btn b16">M</button><button class="btn b16">S</button>
          </div>
          <input class="fader short" type="range" min="0" max="100" :value="s.fader" :aria-label="'Channel ' + s.name + ' volume'" />
          <button class="round" aria-label="Pan"><svg width="18" height="18"><use :href="s.pan === 'mid' ? '#knob' : '#knob-' + s.pan" /></svg></button>
          <button class="round mini-w" aria-label="Width"><svg width="14" height="14"><use :href="s.pan === 'mid' ? '#ring' : '#dots'" /></svg></button>
          <div class="mini-name">{{ s.name }}</div>
          <svg class="mini-spk" width="12" height="14"><use href="#speaker" /></svg>
          <button class="round" aria-label="Record arm"><svg width="20" height="20"><use href="#rec" /></svg></button>
          <div class="band"><span>{{ s.no }}</span></div>
        </div>
      </div>
    </section>
  </div>
</template>

<style>
body { background: #333; }
</style>

<style scoped>
.daw { display: flex; flex-direction: column; min-height: 100vh; overflow: hidden; background: #333; color: #aaa; font-family: Lato, "Open Sans", sans-serif; font-size: 12px; line-height: 16px; }
.daw * { box-sizing: border-box; }
.defs { position: absolute; width: 0; height: 0; }
svg { display: block; flex: none; }
button { font-family: "Open Sans", sans-serif; color: #bcbcbc; margin: 0; padding: 0; border: 0; background: none; display: flex; align-items: center; justify-content: center; flex: none; }
.btn { background: linear-gradient(#343434, #2a2a2a); border: 1px solid #171717; border-radius: 2px; font-weight: 700; font-size: 10px; line-height: 12px; }
.round { border-radius: 50%; }
.led { width: 8px; height: 6px; background: #111; display: block; }

.topbar { display: grid; grid-template-columns: 194px 1fr 15px; height: 62px; }
.tools { display: grid; grid-template-columns: repeat(7, 24px); grid-auto-rows: 24px; padding: 5px 0 0 1px; position: relative; }
.tools::after { content: ""; position: absolute; right: 7px; top: 11px; height: 12px; border-left: 1px dashed #999; }
.tool { width: 24px; height: 24px; }
.ruler-col { padding-top: 12px; min-width: 0; }
.strip-bar { height: 11px; background: #3c3c3c; margin-right: -14px; }
.ruler { position: relative; height: 29px; margin-top: 10px; }
.ticks { width: 100%; height: 29px; overflow: visible; }
.mark { position: absolute; top: 1px; display: flex; flex-direction: column; padding-left: 3px; color: #828282; }
.bar-no { font-size: 10px; line-height: 12px; border-bottom: 1px solid #777; }
.clock { font-size: 9px; line-height: 9px; }
.head-marker { position: absolute; top: 2px; transform: translateX(-50%); }

.arrange { display: grid; grid-template-columns: 194px 1fr 15px; min-height: 448px; }
.tcp { display: flex; flex-direction: column; width: 188px; padding-bottom: 5px; background: #333; border-bottom: 1px solid #666; }
.tcp-row { flex: 1; display: flex; background: #333; }
.tcp-row.child { padding-left: 17px; }
.stripe { width: 16px; background: var(--c); position: relative; display: flex; flex-direction: column; align-items: center; justify-content: space-between; padding: 17px 3px 3px 0; color: rgba(0, 0, 0, .6); font-size: 11px; border-bottom: 1px solid rgba(0, 0, 0, .2); }
.last .stripe { border-radius: 0 0 8px 8px; border: 0; padding-top: 12px; }
.stripe::after { content: ""; position: absolute; right: -3px; top: 22px; width: 5px; height: 5px; border-radius: 50%; background: #222; }
.panel { flex: 1; background: linear-gradient(90deg, var(--p), color-mix(in srgb, var(--p) 94%, #000)); border-bottom: 1px solid rgba(0, 0, 0, .4); padding: 3px 5px 0; }
.child .panel { padding-left: 4px; }
.panel .btn { background: color-mix(in srgb, var(--p) 22%, #2a2a2a); }
.pill { height: 20px; display: flex; align-items: center; background: linear-gradient(#1a1a1a, #262626); border-radius: 10px; }
.track-name { flex: 1; padding-left: 5px; color: var(--c); font-size: 12px; filter: brightness(.88); }
.tcp-buttons { display: flex; margin-top: 3px; padding-left: 17px; }
.child .tcp-buttons { padding-left: 1px; }
.sq { width: 16px; height: 16px; }
.fx { width: 29px; height: 16px; margin-left: 4px; gap: 6px; font-size: 8px; }
.trim { width: 32px; height: 16px; margin-left: 5px; font-size: 8px; font-weight: 600; }
.tcp-meter { width: 16px; background: #242424; display: flex; gap: 1px; padding: 0 1px 1px; }
.chan { flex: 1; position: relative; display: flex; align-items: flex-end; }
.level { display: block; width: 100%; background: #2ccd8c; }
.peak { position: absolute; left: 0; width: 100%; height: 1px; background: #2ea877; }

.timeline { position: relative; background: #444; display: flex; flex-direction: column; padding-bottom: 6px; min-width: 0; }
.lane-row { flex: 1; position: relative; }
.clip { position: absolute; top: 2px; height: 45px; display: flex; flex-direction: column; gap: 1px; }
.take { flex: 1; min-height: 0; position: relative; background: var(--c); border: 1px solid #222; border-left-width: 0; box-shadow: inset 0 1px 0 rgba(255, 255, 255, .3), inset 0 -1px 0 rgba(255, 255, 255, .2); }
.take svg { width: 100%; height: 100%; }
.handle { position: absolute; left: 50%; bottom: 0; width: 9px; height: 5px; margin-left: -4px; background: #8c8c8c; border: 1px solid #333; }
.cursor { position: absolute; top: 0; bottom: 0; width: 1px; }
.play { background: #35907e; top: -21px; }
.edit { background: #e8c44a; opacity: .85; }

.vscroll { display: flex; flex-direction: column; align-items: center; padding: 3px 0 0; }
.dot { width: 9px; height: 9px; border-radius: 50%; background: #080808; color: #ccc; font: 5px/9px "DejaVu Sans", sans-serif; }
.vthumb { width: 9px; height: 350px; margin: 5px 0 39px; border-radius: 4px; background: #555; display: flex; align-items: center; border: 1px solid #606060; }
.vthumb i { width: 100%; height: 1px; background: #111; }
.zoom { width: 8px; height: 8px; }
.vscroll .zoom { margin-top: 9px; }
.vscroll .zoom:nth-of-type(3) { margin-top: 5px; }

.hrow { display: flex; align-items: center; height: 13px; padding-right: 18px; }
.status { width: 196px; padding-left: 1px; font-size: 8px; line-height: 12px; color: #a8a8a8; }
.htrack { flex: 1; display: flex; padding: 0 24% 0 13%; margin: 0 3px; }
.hthumb { flex: 1; height: 9px; border-radius: 4px; background: #555; display: flex; justify-content: space-between; align-items: center; padding: 0 2px; }
.hthumb i { width: 4px; height: 4px; border-radius: 50%; background: #111; }
.hthumb b { width: 1px; height: 6px; background: #111; }
.hrow .zoom { margin-left: 5px; }
.hrow .zoom:last-child { margin-left: 9px; }

.transport { display: flex; align-items: center; height: 35px; padding: 0 18px 1px 4px; }
.keys { display: flex; }
.key { width: 23px; height: 22px; }
.key svg { width: 22px; height: 22px; }
.key.gap { margin-left: 1px; }
.btn.on { background: #276a54; }
.time { margin-left: 8px; width: 303px; font-size: 19px; font-weight: 700; color: #a8a8a8; white-space: nowrap; }
.state { flex: 1; font-size: 13px; }
.selection { display: flex; width: 282px; height: 26px; align-items: center; background: #2b2b2b; padding-left: 7px; font-size: 10px; }
.selection span { flex: none; width: 75px; }
.selection span:first-child { width: 71px; }
.sig, .bpm { margin-left: 5px; height: 26px; background: #2b2b2b; display: flex; align-items: center; justify-content: center; }
.sig { width: 32px; font-size: 10px; }
.bpm { width: 48px; flex-direction: column; font-size: 9px; line-height: 12px; }
.none { margin: 0 7px 0 5px; width: 47px; height: 26px; font-size: 8px; background: #2b2b2b; border-color: #0d0d0d; gap: 2px; }
.rate-knob { width: 26px; height: 26px; border-radius: 50%; background: linear-gradient(#bbb, #bbb) center 3px / 1px 10px no-repeat, #333; border: 2px solid #111; }
.rate { margin-left: 13px; width: 24px; display: flex; flex-direction: column; align-items: center; font-size: 10px; line-height: 14px; }

.mixer { flex: 1; display: flex; align-items: stretch; min-height: 340px; background: #333; }
.b16 { width: 16px; height: 16px; }
.b16 svg { width: 16px; height: 16px; }
.fxbox { width: 16px; height: 28px; flex-direction: column; gap: 4px; font-size: 8px; line-height: 9px; }

.master { width: 106px; flex: none; display: flex; padding-left: 4px; border-right: 1px solid #2a2a2a; }
.master-main { width: 76px; display: flex; flex-direction: column; }
.master-pan { height: 37px; display: flex; flex-direction: column; align-items: center; color: #ddd; font-size: 10px; line-height: 13px; padding-top: 2px; padding-right: 4px; }
.master-body { flex: 1; display: flex; background: #242424; }
.master-meter { width: 57px; }
.db { text-align: center; padding-left: 18px; font-size: 9px; line-height: 15px; white-space: nowrap; }
.pk { display: flex; justify-content: space-around; font-size: 8px; line-height: 25px; padding: 0 0 0 3px; color: #ccc; }
.bars { height: 237px; display: flex; gap: 2px; position: relative; }
.mchan { width: 14px; position: relative; display: flex; align-items: flex-end; }
.mchan.outer { width: 12px; }
.outer .level { background: #2ba873; }
.scale { position: absolute; display: flex; flex-direction: column; font-size: 9px; line-height: 23px; color: #11492f; }
.scale span:nth-child(-n + 2) { color: #626262; }
.left span:nth-child(3), .right span:nth-child(3), .left span:nth-child(4), .right span:nth-child(4) { color: #626262; }
.scale.mid { left: 0; right: 0; top: -12px; align-items: center; }
.scale.left { left: 0; top: -4px; }
.scale.right { right: 0; top: -4px; align-items: flex-end; }
.rms { display: flex; justify-content: space-around; font-size: 8px; line-height: 10px; color: #2fa878; }
.master-name { height: 16px; background: #242424; text-align: center; color: #ddd; font-size: 10px; line-height: 16px; }
.master-side { display: flex; flex-direction: column; align-items: center; width: 25px; padding-top: 5px; }
.cap { font-size: 7px; font-weight: 700; line-height: 13px; color: #aaa; }
.route-m { margin-top: 5px; }
.master-side .fxbox { margin-top: 2px; }
.trim-m { margin-top: 5px; }
.info { margin-top: 2px; font-family: "DejaVu Serif", serif; }

.fader { appearance: none; -webkit-appearance: none; writing-mode: vertical-lr; direction: rtl; width: 17px; height: 180px; margin: 12px 0 0; padding: 0; flex: none; background: linear-gradient(#080808, #080808) center / 3px 100% no-repeat, linear-gradient(#666, #666) 0 55px / 100% 1px no-repeat; }
.fader::-webkit-slider-runnable-track { width: 17px; height: 100%; background: none; }
.fader::-webkit-slider-thumb { appearance: none; -webkit-appearance: none; width: 17px; height: 34px; border-radius: 6px / 4px; border: 1px solid #0c0c0c; box-shadow: 0 2px 2px rgba(0, 0, 0, .4); background: linear-gradient(180deg, #5a5a5a 0, #8a8a8a 3px, #6a6a6a 4px, #1e1e1e 5px, #333 8px, #2c2c2c 15px, #888 16px, #222 17px, #3a3a3a 21px, #8e8e8e 27px, #aaa 28px, #4a4a4a 29px, #2a2a2a 32px); }
.big { height: 256px; margin: 23px 0 0; background: linear-gradient(#080808, #080808) center / 3px 100% no-repeat; }
.short { height: 84px; margin: 12px 0 0; background: linear-gradient(#080808, #080808) center 0 / 3px 78px no-repeat, linear-gradient(#666, #666) 0 26px / 100% 1px no-repeat; }

.strip { width: 71px; flex: none; display: flex; flex-direction: column; background: #262626; }
.strip.wide { width: 90px; }
.strip-head { height: 64px; padding: 4px 5px 0 4px; background: var(--h); border-right: 1px solid rgba(0, 0, 0, .25); }
.strip-head .btn { background: color-mix(in srgb, var(--h) 25%, #2a2a2a); }
.sel { display: block; position: relative; height: 17px; }
.sel::after { content: ""; position: absolute; right: 5px; top: 6px; border: 3px solid transparent; border-top: 5px solid #080808; border-bottom: 0; }
.sel select { appearance: none; -webkit-appearance: none; width: 100%; height: 100%; margin: 0; padding: 0 10px 0 3px; border: 1px solid #1a1a1a; border-radius: 3px 9px 9px 3px; background: color-mix(in srgb, var(--h) 30%, #2c2c2c); color: #ddd; font: 9px/14px Lato, sans-serif; text-overflow: clip; }
.in-row { display: flex; justify-content: space-between; margin-top: 3px; padding-left: 1px; }
.sel.small { width: 31px; height: 16px; }
.small select { font-size: 8px; padding: 0 8px 0 5px; font-weight: 700; line-height: 12px; }
.infx { width: 16px; height: 16px; flex-direction: column; font-size: 7px; line-height: 7px; }
.pan-row { display: flex; justify-content: center; margin-top: 2px; }
.pans { display: flex; align-items: center; margin-left: 1px; height: 18px; }
.pans.both { background: #1a1a1a; border-radius: 9px; width: 35px; margin-left: 0; gap: 2px; }
.strip-body { height: 200px; display: flex; padding: 0 5px 0 3px; border-right: 1px solid #1e1e1e; }
.meter-col { flex: 1; min-width: 0; padding-right: 3px; display: flex; flex-direction: column; }
.peak-text { height: 27px; font-size: 8px; line-height: 27px; color: #7c7c7c; padding-left: 1px; }
.wide .peak-text { padding-left: 10px; }
.meters { flex: 1; display: flex; gap: 1px; }
.strip-btns { width: 16px; margin-left: 7px; padding-top: 5px; }
.route { margin-top: 5px; }
.strip-btns .fxbox { margin-top: 7px; }
.env-btn { margin-top: 5px; }
.phase { width: 16px; height: 13px; margin-top: 7px; }
.strip-foot { height: 22px; display: flex; align-items: center; padding-left: 8px; gap: 4px; border-right: 1px solid #1e1e1e; }
.wide .strip-foot { padding-left: 17px; gap: 14px; }
.strip-name { flex: 1; display: flex; align-items: center; justify-content: center; font-size: 11px; color: var(--c); filter: brightness(.92); border-right: 1px solid #1e1e1e; }
.band { height: 16px; position: relative; background: var(--c); text-align: center; font-size: 11px; line-height: 16px; color: rgba(0, 0, 0, .65); border-right: 1px solid rgba(0, 0, 0, .15); }
.band::before { content: ""; position: absolute; left: 50%; top: 0; width: 6px; height: 3px; margin-left: -3px; border-radius: 0 0 3px 3px; background: #262626; }
.strip.child { background: linear-gradient(#262626, #262626) 0 0 / 100% calc(100% - 17px) no-repeat; }
.child .band { height: 15px; line-height: 15px; margin-bottom: 17px; }
.child.last .band { border-radius: 0 5px 5px 0; border-right: 0; margin-right: 2px; }
.bus .band { background: #333; color: #ddd; padding-left: 12px; display: flex; }
.bus .band span { flex: 1; background: #454545; border-radius: 6px 0 0 0; }
.tri { display: none; }
.bus .tri { display: block; position: absolute; left: 4px; top: 4px; border: 4px solid transparent; border-left: 5px solid #aaa; border-right: 0; }

.minis { width: 360px; flex: none; display: grid; grid-template-columns: repeat(16, 1fr); }
.mini { display: flex; flex-direction: column; align-items: center; background: #262626; border-right: 1px solid #1c1c1c; }
.mini-head { align-self: stretch; height: 100px; background: var(--h); display: flex; flex-direction: column; align-items: center; padding-top: 7px; }
.blank { margin: 6px 0; }
.mini-head .blank { background: color-mix(in srgb, var(--h) 35%, #2c2c2c); }
.mini .short { margin-bottom: 9px; }
.mini-w { width: 17px; height: 17px; margin-top: 2px; border-radius: 0; background: #1c1c1c; }
.mini-name { align-self: stretch; padding-left: 1px; margin-top: 15px; font-size: 12px; color: var(--t); }
.mini-spk { margin: 6px 0 3px 4px; }
.mini .band { margin-top: auto; align-self: stretch; background: var(--b); color: #e0e0f0; }
</style>
